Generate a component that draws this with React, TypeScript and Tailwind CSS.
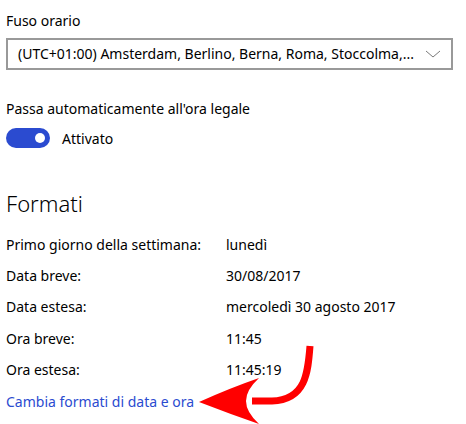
import React from "react";

const formats = [
  { label: "Primo giorno della settimana:", value: "lunedì" },
  { label: "Data breve:", value: "30/08/2017" },
  { label: "Data estesa:", value: "mercoledì 30 agosto 2017" },
  { label: "Ora breve:", value: "11:45" },
  { label: "Ora estesa:", value: "11:45:19" },
];

const App = () => {
  return (
    <div
      className="relative h-[424px] w-[466px] overflow-hidden bg-white pl-[6px] text-[14px] leading-[20px] text-black"
      style={{ fontFamily: '"Noto Sans", "Open Sans", sans-serif' }}
    >
      <div className="mt-[11px]">Fuso orario</div>

      {/* dropdown */}
      <div className="mt-[7px] flex h-[32px] w-[447px] items-center justify-between border-2 border-[#999999] pl-[10px] pr-[8px]">
        <span className="whitespace-nowrap">(UTC+01:00) Amsterdam, Berlino, Berna, Roma, Stoccolma,...</span>
        <svg width="16" height="10" viewBox="0 0 16 10" className="mr-[2px]">
          <path d="M1 2 L8 8 L15 2" fill="none" stroke="#7a7a7a" strokeWidth="1" />
        </svg>
      </div>

      <div className="mt-[29px]">Passa automaticamente all'ora legale</div>

      {/* toggle */}
      <div className="mt-[9px] flex h-[20px] items-center gap-[12px]">
        <div className="flex h-[20px] w-[44px] items-center justify-end rounded-full bg-[#2b4bd0] pr-[5px]">
          <div className="h-[10px] w-[10px] rounded-full bg-white" />
        </div>
        <span className="pt-[1px]">Attivato</span>
      </div>

      <div className="mt-[39px] text-[22px] font-light leading-[32px]">Formati</div>

      <div className="mt-[10px]">
        {formats.map((f, i) => (
          <div key={i} className="flex h-[31.4px] items-center">
            <span className="w-[220px] shrink-0">{f.label}</span>
            <span>{f.value}</span>
          </div>
        ))}
        <div className="flex h-[31.4px] items-center text-[#2b4bd0]">Cambia formati di data e ora</div>
      </div>

      {/* red annotation arrow */}
      <svg className="absolute left-0 top-0" width="466" height="424" viewBox="0 0 466 424">
        <path
          d="M310 346 C308 372, 306 400, 272 401 L252 401"
          fill="none"
          stroke="#ff0000"
          strokeWidth="7"
        />
        <path d="M199 402 Q230 388 259 378 Q246 390 246 401 Q246 412 259 424 Q230 414 199 402 Z" fill="#ff0000" />
      </svg>
    </div>
  );
};

export default App;
